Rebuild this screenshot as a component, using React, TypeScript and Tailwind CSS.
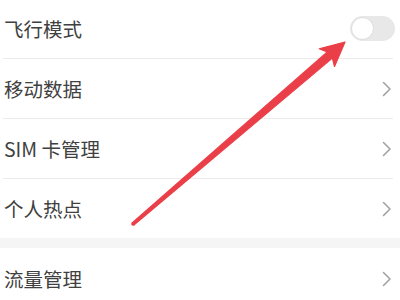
import React from "react";

function Chevron() {
  return (
    <svg width="10" height="16" viewBox="0 0 10 16" className="mr-[8px]">
      <polyline points="1.5,1.5 8,8 1.5,14.5" fill="none" stroke="#a3a3a3" strokeWidth="1.6" strokeLinecap="round" strokeLinejoin="round" />
    </svg>
  );
}

function Row({ label, right, h, divider }: { label: string; right: React.ReactNode; h: string; divider?: boolean }) {
  return (
    <div>
      <div className={`flex items-center justify-between pl-[4px] ${h}`}>
        <span className="text-[19.5px] text-[#404040] leading-none">{label}</span>
        {right}
      </div>
      {divider && <div className="ml-[3px] mr-[7px] h-px bg-[#ececec]" />}
    </div>
  );
}

export default function App() {
  const toggle = (
    <div className="mr-[5px] mt-[-2px] h-[25px] w-[45px] rounded-full bg-[#e8e8e8] p-px">
      <div className="h-[23px] w-[23px] rounded-full border border-[#dcdcdc] bg-white" />
    </div>
  );
  return (
    <div className="relative h-[300px] w-[400px] overflow-hidden bg-white" style={{ fontFamily: '"Noto Sans CJK SC", "Noto Sans", sans-serif' }}>
      <Row label="飞行模式" right={toggle} h="h-[58px]" divider />
      <Row label="移动数据" right={<Chevron />} h="h-[59px]" divider />
      <Row label="SIM 卡管理" right={<Chevron />} h="h-[59px]" divider />
      <Row label="个人热点" right={<Chevron />} h="h-[59px]" />
      <div className="h-[10px] bg-[#f5f5f5]" />
      <Row label="流量管理" right={<Chevron />} h="h-[62px]" />
      <svg className="pointer-events-none absolute left-0 top-0" width="400" height="300" viewBox="0 0 400 300">
        <polygon
          points="345,42 334.5,66.5 332.4,58.1 133.9,225 132.1,223 327.2,51.9 319.2,48.8"
          fill="#ea3f48"
          stroke="#ea3f48"
          strokeWidth="1.2"
          strokeLinejoin="round"
        />
        <circle cx="133" cy="224" r="1.8" fill="#ea3f48" />
      </svg>
    </div>
  );
}
